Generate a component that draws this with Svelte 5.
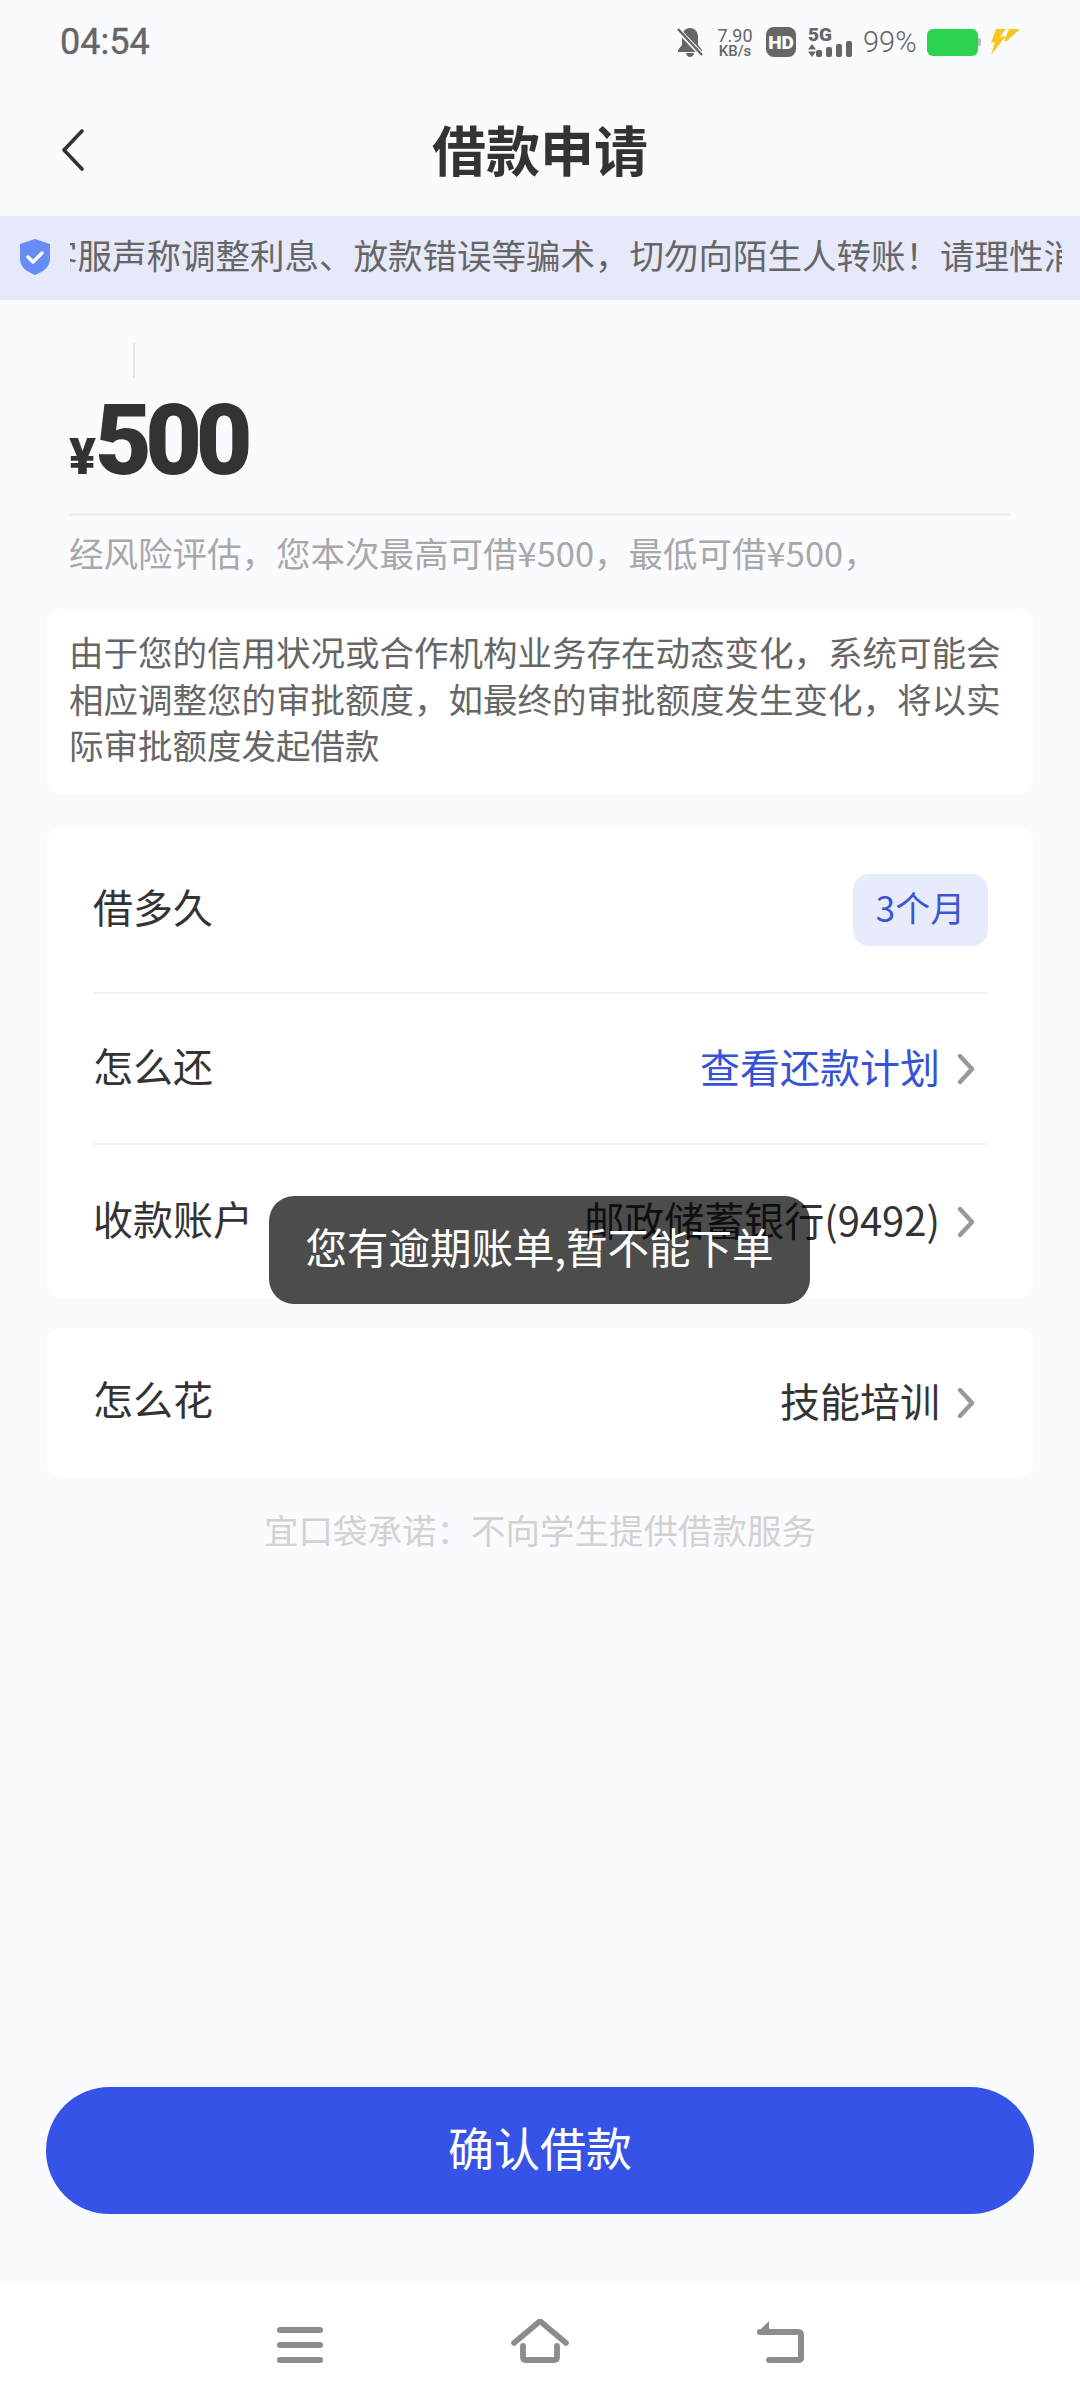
<script lang="ts">
  const notice = "客服声称调整利息、放款错误等骗术，切勿向陌生人转账！请理性消费";
  const bars = [7, 10, 13, 16];
</script>

<div class="page">
  <div class="status">
    <span class="time">04:54</span>
    <div class="status-right">
      <svg class="bell" viewBox="0 0 26 30" aria-hidden="true">
        <path d="M13 1c-5 0-8 4-8 9v8l-4 5v2h24v-2l-4-5v-8c0-5-3-9-8-9z M9 26h8c0 2-2 4-4 4s-4-2-4-4z" fill="#666" />
        <path d="M1 3l24 25" stroke="#fafbff" stroke-width="5" />
        <path d="M1 2l24 26" stroke="#666" stroke-width="2.4" />
      </svg>
      <div class="speed"><span>7.90</span><span class="unit">KB/s</span></div>
      <span class="hd">HD</span>
      <div class="net">
        <span class="five-g">5G</span>
        <svg class="arrows" viewBox="0 0 8 13" aria-hidden="true">
          <path d="M4 0l4 5.5H0z M0 7.5h8L4 13z" fill="#666" />
        </svg>
      </div>
      <div class="signal">
        {#each bars as h}
          <i style="height:{h}px"></i>
        {/each}
      </div>
      <span class="pct">99%</span>
      <div class="battery"><div class="cell"></div><div class="cap"></div></div>
      <svg class="bolt" viewBox="0 0 30 26" aria-hidden="true">
        <path d="M6 0h10L10 8l6-1L1 26 5 13l-4 1z" fill="#f6c81f" />
        <path d="M19 0h11L17 12l-3 0z" fill="#f6c81f" />
      </svg>
    </div>
  </div>

  <header class="nav">
    <svg class="back" viewBox="0 0 24 42" aria-hidden="true">
      <path d="M21 2L3 21l18 19" fill="none" stroke="#333" stroke-width="3.6" stroke-linecap="round" stroke-linejoin="round" />
    </svg>
    <h1>借款申请</h1>
  </header>

  <div class="notice">
    <svg class="shield" viewBox="0 0 30 36" aria-hidden="true">
      <path d="M15 0l15 5v15c0 8-7 13-15 16C7 33 0 28 0 20V5z" fill="#688cf5" />
      <path d="M8 18l5 5 9-9" fill="none" stroke="#fff" stroke-width="3.4" stroke-linecap="round" stroke-linejoin="round" />
    </svg>
    <div class="marquee"><span>{notice}</span></div>
  </div>

  <section class="amount">
    <div class="caret"></div>
    <div class="value"><span class="yen">¥</span>500</div>
    <p class="limit">经风险评估，您本次最高可借¥500，最低可借¥500，</p>
  </section>

  <div class="card tip">由于您的信用状况或合作机构业务存在动态变化，系统可能会相应调整您的审批额度，如最终的审批额度发生变化，将以实际审批额度发起借款</div>

  <div class="card rows">
    <div class="row first">
      <span class="label">借多久</span>
      <span class="chip">3个月</span>
    </div>
    <div class="row second">
      <span class="label">怎么还</span>
      <span class="link">查看还款计划<svg class="chev" viewBox="0 0 18 32" aria-hidden="true"><path d="M3 3l12 13L3 29" fill="none" stroke="#999" stroke-width="4.4" stroke-linecap="round" stroke-linejoin="round" /></svg></span>
    </div>
    <div class="row third">
      <span class="label">收款账户</span>
      <span class="val">邮政储蓄银行(9492)<svg class="chev" viewBox="0 0 18 32" aria-hidden="true"><path d="M3 3l12 13L3 29" fill="none" stroke="#999" stroke-width="4.4" stroke-linecap="round" stroke-linejoin="round" /></svg></span>
    </div>
  </div>

  <div class="card rows single">
    <div class="row only">
      <span class="label">怎么花</span>
      <span class="val">技能培训<svg class="chev" viewBox="0 0 18 32" aria-hidden="true"><path d="M3 3l12 13L3 29" fill="none" stroke="#999" stroke-width="4.4" stroke-linecap="round" stroke-linejoin="round" /></svg></span>
    </div>
  </div>

  <p class="promise">宜口袋承诺：不向学生提供借款服务</p>

  <div class="grow"></div>

  <button class="confirm">确认借款</button>

  <nav class="softkeys">
    <svg class="key" viewBox="0 0 46 36" aria-hidden="true">
      <path d="M3 3h40M3 18h40M3 33h40" stroke="#8c8c8c" stroke-width="6" stroke-linecap="round" />
    </svg>
    <svg class="key home" viewBox="0 0 58 44" aria-hidden="true">
      <path d="M3 24L29 2l26 22" fill="none" stroke="#8c8c8c" stroke-width="5.6" stroke-linecap="round" stroke-linejoin="round" />
      <path d="M12 27v11c0 2 1 3 3 3h28c2 0 3-1 3-3V27" fill="none" stroke="#8c8c8c" stroke-width="5.8" stroke-linecap="round" />
    </svg>
    <svg class="key ret" viewBox="0 0 48 42" aria-hidden="true">
      <path d="M4 11h38c2 0 3 1 3 3v23c0 2-1 2-3 2H13" fill="none" stroke="#8c8c8c" stroke-width="6" stroke-linecap="round" />
      <path d="M13 0L1 12h12z" fill="#8c8c8c" />
    </svg>
  </nav>

  <div class="toast">您有逾期账单,暂不能下单</div>
</div>

<style>
  :global(body) {
    margin: 0;
    background: #fafbff;
  }

  .page {
    position: relative;
    display: flex;
    flex-direction: column;
    height: 2408px;
    background: #fafbff;
    font-family: "Noto Sans CJK SC", "Noto Sans", sans-serif;
    color: #333;
    overflow: hidden;
  }

  .status {
    display: flex;
    align-items: center;
    justify-content: space-between;
    box-sizing: border-box;
    height: 82px;
    padding: 2px 60px 0;
    flex: none;
    color: #666;
  }

  .time {
    font-family: Roboto, sans-serif;
    font-size: 36px;
    font-weight: 400;
    -webkit-text-stroke: 0.4px #666;
  }

  .status-right {
    display: flex;
    align-items: center;
  }

  .bell {
    width: 26px;
    height: 30px;
  }

  .speed {
    display: flex;
    flex-direction: column;
    align-items: center;
    width: 36px;
    margin-left: 14px;
    font-family: Roboto, sans-serif;
    font-size: 18px;
    line-height: 17px;
  }

  .unit {
    font-size: 15px;
    line-height: 14px;
    font-weight: 500;
  }

  .hd {
    display: flex;
    align-items: center;
    justify-content: center;
    width: 30px;
    height: 30px;
    margin-left: 13px;
    border-radius: 8px;
    background: #666;
    color: #fff;
    font-family: Roboto, sans-serif;
    font-size: 19px;
    font-weight: 900;
  }

  .net {
    display: flex;
    flex-direction: column;
    width: 24px;
    margin-left: 12px;
  }

  .five-g {
    font-family: Roboto, sans-serif;
    font-size: 19px;
    line-height: 16px;
    font-weight: 900;
  }

  .arrows {
    display: block;
    width: 8px;
    height: 13px;
    margin-top: 1px;
  }

  .signal {
    display: flex;
    align-items: flex-end;
    gap: 4px;
    height: 30px;
    margin-left: -16px;
  }

  .signal i {
    width: 6px;
    border-radius: 2px;
    background: #666;
  }

  .pct {
    width: 54px;
    margin-left: 11px;
    font-family: Roboto, sans-serif;
    font-size: 29px;
    font-weight: 300;
    line-height: 30px;
    white-space: nowrap;
  }

  .battery {
    display: flex;
    align-items: center;
    margin-left: 10px;
  }

  .cell {
    width: 51px;
    height: 27px;
    border-radius: 6px;
    background: #2bd350;
  }

  .cap {
    width: 3px;
    height: 8px;
    border-radius: 0 2px 2px 0;
    background: #bbb;
  }

  .bolt {
    width: 30px;
    height: 26px;
    margin-left: 9px;
  }

  .nav {
    position: relative;
    display: flex;
    align-items: center;
    justify-content: center;
    height: 134px;
    flex: none;
  }

  .back {
    position: absolute;
    left: 61px;
    top: 47px;
    width: 24px;
    height: 42px;
  }

  h1 {
    margin: 0;
    font-size: 54px;
    font-weight: 700;
    line-height: 70px;
    color: #333;
  }

  .notice {
    display: flex;
    align-items: center;
    height: 84px;
    flex: none;
    background: #e6e9fa;
  }

  .shield {
    width: 30px;
    height: 36px;
    margin: 0 0 2px 20px;
    flex: none;
  }

  .marquee {
    width: 992px;
    margin-left: 20px;
    padding-bottom: 8px;
    overflow: hidden;
    white-space: nowrap;
    color: #666;
    font-size: 34.5px;
    line-height: 50px;
  }

  .marquee span {
    display: inline-block;
    margin-left: -27px;
  }

  .amount {
    display: flex;
    flex-direction: column;
    margin: 0 70px 0 69px;
    flex: none;
  }

  .caret {
    width: 2px;
    height: 35px;
    margin: 43px 0 0 64px;
    background: #e6e6e6;
  }

  .value {
    box-sizing: border-box;
    height: 138px;
    padding-top: 3px;
    border-bottom: 3px solid #eeeff2;
    font-family: Roboto, sans-serif;
    font-size: 98px;
    font-weight: 900;
    line-height: 120px;
    letter-spacing: -6.5px;
    color: #333;
  }

  .yen {
    font-size: 50px;
    letter-spacing: -1px;
  }

  .limit {
    margin: 11px 0 0;
    font-size: 34.5px;
    line-height: 50px;
    white-space: nowrap;
    color: #a8a8a8;
  }

  .card {
    margin: 0 46px;
    flex: none;
    border-radius: 16px;
    background: #fff;
  }

  .tip {
    box-sizing: border-box;
    height: 185px;
    margin-top: 32px;
    padding: 19px 20px 0 23px;
    font-size: 34.5px;
    line-height: 46.5px;
    color: #666;
  }

  .rows {
    box-sizing: border-box;
    margin-top: 34px;
    padding: 0 46px 0 47px;
  }

  .row {
    display: flex;
    align-items: center;
    justify-content: space-between;
    box-sizing: border-box;
    font-size: 40px;
    color: #333;
  }

  .label {
    padding-bottom: 8px;
  }

  .first {
    height: 166px;
    border-bottom: 2px solid #f1f2f4;
  }

  .second {
    height: 151px;
    border-bottom: 2px solid #f1f2f4;
  }

  .third {
    height: 153px;
  }

  .single {
    margin-top: 30px;
  }

  .only {
    height: 149px;
  }

  .only .label {
    padding-bottom: 10px;
  }

  .only .val {
    padding-bottom: 6px;
  }

  .chip {
    display: flex;
    align-items: center;
    justify-content: center;
    box-sizing: border-box;
    width: 135px;
    height: 72px;
    padding-bottom: 8px;
    border-radius: 16px;
    background: #e8ebfc;
    color: #3f55d0;
    font-size: 35px;
  }

  .link,
  .val {
    display: flex;
    align-items: center;
    line-height: 58px;
    padding-bottom: 6px;
  }

  .link {
    color: #3653d6;
  }

  .chev {
    width: 18px;
    height: 32px;
    margin: 6px 13px 0 17px;
  }

  .promise {
    margin: 27px 0 0;
    text-align: center;
    font-size: 34.5px;
    line-height: 50px;
    color: #d2d2d2;
  }

  .grow {
    flex: 1;
  }

  .confirm {
    display: block;
    box-sizing: border-box;
    height: 127px;
    margin: 0 46px;
    padding: 0 0 9px;
    flex: none;
    border: 0;
    border-radius: 64px;
    background: #3653e8;
    color: #fff;
    font-family: inherit;
    font-size: 46px;
  }

  .softkeys {
    display: flex;
    align-items: flex-end;
    height: 127px;
    margin-top: 67px;
    flex: none;
    padding: 0 0 45px 277px;
    box-sizing: border-box;
    background: #fff;
  }

  .key {
    width: 46px;
    height: 36px;
  }

  .home {
    width: 58px;
    height: 44px;
    margin-left: 188px;
  }

  .ret {
    width: 48px;
    height: 42px;
    margin-left: 187px;
  }

  /* translucent, the row text behind it stays readable */
  .toast {
    position: absolute;
    left: 269px;
    top: 1196px;
    box-sizing: border-box;
    width: 541px;
    height: 108px;
    padding-top: 23px;
    border-radius: 25px;
    background: rgba(0, 0, 0, 0.7);
    color: #fff;
    font-size: 41.5px;
    line-height: 54px;
    text-align: center;
    white-space: nowrap;
  }
</style>
